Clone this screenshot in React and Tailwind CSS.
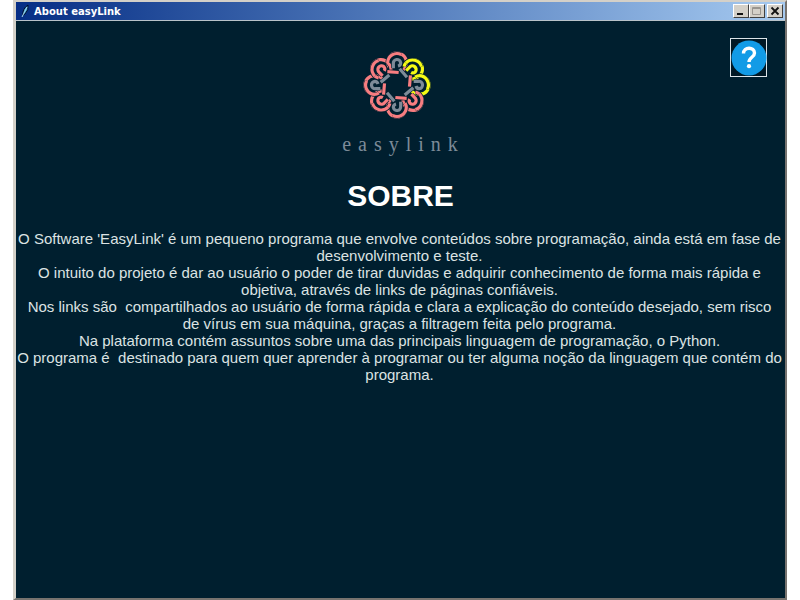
const paragraphs = [
  "O Software 'EasyLink' é um pequeno programa que envolve conteúdos sobre programação, ainda está em fase de desenvolvimento e teste.",
  'O intuito do projeto é dar ao usuário o poder de tirar duvidas e adquirir conhecimento de forma mais rápida e objetiva, através de links de páginas confiáveis.',
  'Nos links são  compartilhados ao usuário de forma rápida e clara a explicação do conteúdo desejado, sem risco\nde vírus em sua máquina, graças a filtragem feita pelo programa.',
  'Na plataforma contém assuntos sobre uma das principais linguagem de programação, o Python.',
  'O programa é  destinado para quem quer aprender à programar ou ter alguma noção da linguagem que contém do programa.',
];

const PINK = '#f77d80';
const GREY = '#7d8b98';
const YELLOW = '#f6fb14';
const NAVY = '#001f2f';

// Outer arc, inner hook and inner edge colours, clockwise from the top loop.
const loops = [
  [PINK, GREY, GREY],
  [YELLOW, YELLOW, PINK],
  [YELLOW, GREY, GREY],
  [PINK, PINK, PINK],
  [PINK, GREY, GREY],
  [PINK, PINK, PINK],
  [PINK, GREY, GREY],
  [PINK, PINK, PINK],
];

function Strand({ d, color }) {
  return (
    <>
      <path d={d} stroke={NAVY} strokeWidth="13" />
      <path d={d} stroke={color} strokeWidth="9.5" />
    </>
  );
}

function Logo() {
  return (
    <svg viewBox="-105 -105 210 210" className="size-[70px]" fill="none" role="img" aria-label="easylink">
      {loops.map(([, , edge], i) => (
        <g key={i} transform={`rotate(${i * 45})`}>
          <Strand color={edge} d="M8 -49 L30 -23" />
        </g>
      ))}
      {loops.map(([outer], i) => (
        <g key={i} transform={`rotate(${i * 45})`}>
          <Strand color={outer} d="M-24 -54 A28 28 0 1 1 28 -66 Q28 -54 20 -45" />
        </g>
      ))}
      {loops.map(([, hook], i) => (
        <g key={i} transform={`rotate(${i * 45})`}>
          <Strand color={hook} d="M-11 -50 V-64 A11 11 0 0 1 11 -67 Q11 -59 3 -57" />
        </g>
      ))}
      {loops.map(([outer], i) => (
        <g key={i} transform={`rotate(${i * 45})`}>
          <Strand color={outer} d="M-28 -66 A28 28 0 0 1 13 -91" />
        </g>
      ))}
    </svg>
  );
}

function Feather() {
  return (
    <svg viewBox="0 0 12 16" className="h-4 w-3" aria-hidden="true">
      <path d="M3 12 Q2 6 8 2 Q9 7 5 11 Z" fill="#3c93c4" stroke="#020c28" />
      <path d="M2 14 L7 4" stroke="#a9dcf0" fill="none" />
    </svg>
  );
}

function CaptionButton({ label, children }) {
  return (
    <button
      type="button"
      aria-label={label}
      className="flex h-[14px] w-4 items-center justify-center border border-t-white border-l-white border-r-[#404040] border-b-[#404040] bg-[#d4d0c8]"
    >
      <svg viewBox="0 0 12 10" className="h-[10px] w-3" fill="none" aria-hidden="true">
        {children}
      </svg>
    </button>
  );
}

export default function App() {
  return (
    <div className="flex min-h-screen bg-white px-[13px] font-['Liberation_Sans',Arial,sans-serif]">
      <main className="flex grow flex-col border-t-2 border-r-2 border-b-2 border-l-3 border-t-[#d4d0c8] border-r-[#77736f] border-b-[#77736f] border-l-[#d4d0c8] bg-[#001f2f]">
        <header className="flex h-[19px] items-center border-b border-[#b9c3ca] bg-linear-to-r from-[#062d85] to-[#a6caf0] pr-0.5 pl-1">
          <Feather />
          <h1 className="ml-0.5 grow font-['DejaVu_Sans',Verdana,sans-serif] text-[10px] font-bold text-white">About easyLink</h1>
          <div className="flex">
            <CaptionButton label="Minimizar">
              <path d="M2 8 H8" stroke="#111" strokeWidth="2" />
            </CaptionButton>
            <CaptionButton label="Maximizar">
              <path d="M1.5 1.5 H9.5 V8.5 H1.5 Z M1 2.5 H10" stroke="#99958f" />
            </CaptionButton>
            <div className="ml-0.5">
              <CaptionButton label="Fechar">
                <path d="M2.5 1.5 L9.5 8.5 M9.5 1.5 L2.5 8.5" stroke="#111" strokeWidth="1.8" />
              </CaptionButton>
            </div>
          </div>
        </header>

        <div className="grid grid-cols-[1fr_auto_1fr] pt-[17px]">
          <div className="col-start-2 flex flex-col items-center pt-3">
            <div className="pr-2">
              <Logo />
            </div>
            <p className="mt-3 pl-1.5 font-['Liberation_Serif',serif] text-xl leading-6 tracking-[7px] text-[#7d8b98]">easylink</p>
          </div>
          <button
            type="button"
            aria-label="Ajuda"
            className="mr-[18px] flex h-[39px] w-[37px] items-center justify-center self-start justify-self-end border border-[#dce4e8] bg-black/20"
          >
            <svg viewBox="0 0 36 36" className="size-9 shrink-0" fill="none" aria-hidden="true">
              <circle cx="18" cy="18" r="17.5" fill="#129be6" />
              <path d="M12.5 13.5 C12.5 6.5 23.5 6.5 23.5 13 C23.5 17.5 18 17 18 22" stroke="#fff" strokeWidth="3.4" />
              <circle cx="18" cy="26.2" r="2.1" fill="#fff" />
            </svg>
          </button>
        </div>

        <h2 className="mt-5 text-center text-3xl leading-10 font-bold text-white">SOBRE</h2>
        <section className="mt-3.5 pr-0.5 text-center text-[15px] leading-[17px] whitespace-pre-wrap text-[#dce3e3]">
          {paragraphs.map((text) => (
            <p key={text}>{text}</p>
          ))}
        </section>
      </main>
    </div>
  );
}
